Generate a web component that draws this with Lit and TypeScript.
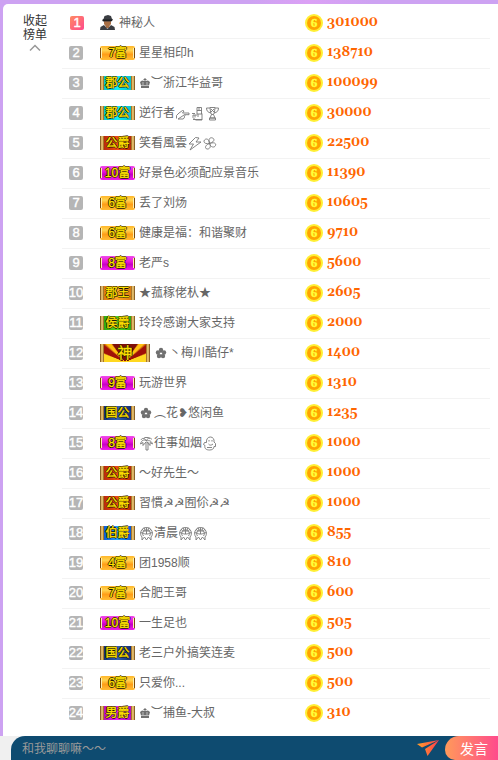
import { LitElement, html, css, svg } from "lit";
import { customElement } from "lit/decorators.js";
import { classMap } from "lit/directives/class-map.js";

type Title = { text: string; tone: string };
type Entry = { title?: Title; name: string; score: number };

const t = (text: string, tone: string): Title => ({ text, tone });

const entries: Entry[] = [
  { name: "神秘人", score: 301000 },
  { title: t("7富", "gold"), name: "星星相印h", score: 138710 },
  { title: t("郡公", "cyan"), name: "{crown}︶浙江华益哥", score: 100099 },
  { title: t("郡公", "cyan"), name: "逆行者{hand}{peace}{cup}", score: 30000 },
  { title: t("公爵", "red"), name: "笑看風雲{bolt}{clover}", score: 22500 },
  { title: t("10富", "pink"), name: "好景色必须配应景音乐", score: 11390 },
  { title: t("6富", "gold"), name: "丢了刘炀", score: 10605 },
  { title: t("6富", "gold"), name: "健康是福：和谐聚财", score: 9710 },
  { title: t("8富", "pink"), name: "老严s", score: 5600 },
  { title: t("郡王", "orange"), name: "★菰稼佬朲★", score: 2605 },
  { title: t("侯爵", "green"), name: "玲玲感谢大家支持", score: 2000 },
  { title: t("神", "god"), name: "{flower}丶梅川酷仔*", score: 1400 },
  { title: t("9富", "pink"), name: "玩游世界", score: 1310 },
  { title: t("国公", "navy"), name: "{flower}︵花❥悠闲鱼", score: 1235 },
  { title: t("8富", "pink"), name: "{palm}往事如烟{ghost}", score: 1000 },
  { title: t("公爵", "red"), name: "～好先生～", score: 1000 },
  { title: t("公爵", "red"), name: "習慣☭☭囿伱☭☭", score: 1000 },
  { title: t("伯爵", "blue"), name: "{mum}清晨{mum}{mum}", score: 855 },
  { title: t("4富", "gold"), name: "团1958顺", score: 810 },
  { title: t("7富", "gold"), name: "合肥王哥", score: 600 },
  { title: t("10富", "pink"), name: "一生足也", score: 505 },
  { title: t("国公", "navy"), name: "老三户外搞笑连麦", score: 500 },
  { title: t("6富", "gold"), name: "只爱你...", score: 500 },
  { title: t("男爵", "purple"), name: "{crown}︶捕鱼-大叔", score: 310 },
];

const glyphs: Record<string, unknown> = {
  hand: svg`<path d="M1.500 12.500V9.500L4 7l3.500-2.500L9 5 7.500 7H14v1.700H9.500M9.500 8.700l.5 1-.8 1.200.2 1L8 13H3z"/>`,
  peace: svg`<path d="M7 8V1.500h4.500V8M7 4.500h4.500M9 1.500v3M12 7.500V14H5.500L3 11.500V9h4M2 7.500h3M7 8h5M5 9v2.500M8 8v3M3 13.500h9"/>`,
  cup: svg`<path d="M5 1.500h5L9.500 6 8.500 8.500h-2L5.500 6zM5 2H1.500C1.500 5 3 6.500 6 7M10 2h3.500c0 3-1.500 4.500-4.500 5M6.500 8.500 5 12h5L8.500 8.500M4.500 14V12h6v2zM6 3l3 3M9 3 6 6"/>`,
  bolt: svg`<path d="M8.500 1.500 2 8h4.500L3 14 14 6H9L12 2z"/>`,
  clover: svg`<path d="M7.500 7.500C3 8.500 1 6 2.500 4s5-1 5 3.500C6 3 8 1 10.500 2s2 4-3 5.500c4-1.500 7-.5 6 2s-5 2-6-2c2 3 0 6-2.500 5.500S3 9 7.500 7.500z"/>`,
  palm: svg`<path d="M7.500 5C5 3 2.500 4 1.500 8L4 6.500 4 9.500 7 6M7.500 5C6 2 3 1.500 2 4M7.500 5C8 2 11 1 13 3.500M7.500 5c3-1 5 0 6 3L11 6.500v3L8 6M4.500 2.500 6 1.500h3l2 1M7 6v8M9 6v8M7 14h2"/>`,
  ghost: svg`<path d="M4.500 6.500C4 3 6 1 8.500 1S12.500 3.500 12 6l1.500 1.500v3L12 10.500c0 2.500-2 3.500-4.500 3.500S2 13 3 9.500L1.500 8.500l1-2zM7 4v1.500M10 4v1.500M6.500 8c1 1.500 3 1.500 4.500 0M5 11.500h5"/>`,
  mum: svg`<path d="M3 11C0 8 2 1.500 7.500 1.500S15 8 12 11M4.500 10C2.500 7 4 4 7.500 4S12.500 7 10.500 10M7.500 1.500V8M3 3l2.500 3M12 3 9.500 6M1.500 6.500l4 1M13.500 6.500l-4 1M5.500 8h4M3 11v3l2.500-3 2 3 2-3L12 14v-3M5 1.500l1.500 4M10 1.500l-1.500 4"/>`,
  flower: svg`<g class="solid"><circle cx="7" cy="4" r="2.200"/><circle cx="10" cy="6.500" r="2.200"/><circle cx="9" cy="10" r="2.200"/><circle cx="5" cy="10" r="2.200"/><circle cx="4" cy="6.500" r="2.200"/></g><circle class="core" cx="7" cy="7.500" r="1.500"/>`,
  crown: svg`<path class="solid" d="M5.500 2h1v1h1v1h-1v1L9 4.500l2 1.500-1 3.500V12H2V9.500L1 6l2-1.500L5.500 5V4h-1V3h1z"/><path class="slit" d="M2 9.500h8M4 6v3M8 6v3"/>`,
};

@customElement("rank-name")
export class RankName extends LitElement {
  static properties = { value: {} };
  declare value: string;

  static styles = css`
    :host { display: inline-flex; align-items: center; white-space: nowrap; }
    svg { width: 15px; height: 15px; fill: none; stroke: #777; stroke-width: 0.9; }
    svg.slim { width: 12px; }
    .solid { fill: #707070; stroke: none; }
    .core { fill: #fff; stroke: #666; }
    .slit { stroke: #ddd; stroke-width: 0.7; }
  `;

  render() {
    return this.value
      .split(/(\{\w+\})/)
      .filter(Boolean)
      .map((part) => {
        if (!part.startsWith("{")) return html`<span>${part}</span>`;
        const name = part.slice(1, -1);
        const slim = name === "crown";
        return html`<svg class=${slim ? "slim" : ""} viewBox=${slim ? "0 0 12 15" : "0 0 15 15"} aria-hidden="true">${glyphs[name]}</svg>`;
      });
  }
}

@customElement("app-root")
export class AppRoot extends LitElement {
  static styles = css`
    :host {
      display: flex;
      flex-direction: column;
      min-height: 100vh;
      box-sizing: border-box;
      font: 12px/15px "Liberation Sans", "Noto Sans CJK SC", "DejaVu Sans", sans-serif;
      color: #666;
      background: linear-gradient(90deg, #cda2f2 50%, #dba0f5 62%, #cda2f2 75%);
    }
    .panel {
      flex: 1;
      display: flex;
      align-items: flex-start;
      margin: 4px 0 0 3px;
      padding: 5px 8px 0 0;
      background: #fff;
      border-top-left-radius: 5px;
    }
    .toggle {
      flex: none;
      width: 59px;
      display: flex;
      flex-direction: column;
      align-items: center;
      padding: 5px 0 0 5px;
      border: 0;
      background: none;
      color: #333;
      font: inherit;
      line-height: 14px;
    }
    .toggle svg { width: 12px; height: 8px; margin-top: 2px; fill: none; stroke: #999; stroke-width: 1.500; }
    table { flex: 1; border-collapse: separate; border-spacing: 0; table-layout: fixed; width: 100%; }
    td { height: 27px; padding: 0 0 2px; border-bottom: 1px solid #f3f3f3; vertical-align: middle; }
    tr:last-child td { border-bottom-color: transparent; }
    .rank-cell { width: 31px; padding-left: 7px; }
    .name-cell { width: 205px; }
    .rank {
      display: flex;
      align-items: center;
      justify-content: center;
      width: 14px;
      height: 14px;
      border-radius: 2px;
      background: #b5b5b5;
      color: #fff;
      font-size: 13px;
      -webkit-text-stroke: 0.4px #fff;
    }
    .rank.first { margin-left: 1px; background: linear-gradient(135deg, #ff8a62, #ff4a8d); }
    .person, .score { display: flex; align-items: center; gap: 4px; }
    rank-name { padding-top: 2px; }
    .avatar { width: 15px; height: 15px; }
    .score {
      color: #ff6600;
      font: bold 13px/15px Georgia, Gelasio, "DejaVu Serif", serif;
      font-variant-numeric: oldstyle-nums;
    }
    .coin { width: 18px; height: 18px; }
    .coin text { font: bold 13px "Liberation Serif", serif; fill: #ffff3c; stroke: #ffff3c; stroke-width: 0.4; text-anchor: middle; }

    .title {
      --plate: #fb2;
      display: flex;
      align-items: center;
      justify-content: center;
      box-sizing: border-box;
      width: 35px;
      height: 14px;
      background:
        linear-gradient(90deg, #63380a, #ffdc84 50%, #8a5510) left / 4px 100% no-repeat,
        linear-gradient(90deg, #8a5510, #ffdc84 50%, #63380a) right / 4px 100% no-repeat,
        var(--plate);
      color: #ffe000;
      font: 12px/14px "Liberation Sans", "Noto Sans CJK SC", sans-serif;
      -webkit-text-stroke: 0.3px #ffe000;
      text-shadow: 1px 0 #1a1200, -1px 0 #1a1200, 0 1px #1a1200, 0 -1px #1a1200;
    }
    .gold, .pink {
      border-radius: 2px;
      background:
        linear-gradient(90deg, #7a4a10 1px, #fff0b0 1px) left / 2px 10px no-repeat,
        linear-gradient(270deg, #7a4a10 1px, #fff0b0 1px) right / 2px 10px no-repeat,
        var(--plate);
    }
    .gold { --plate: linear-gradient(#ffb52a, #ffd34d 30%, #ff9d16 60%, #ffbd35); }
    .pink { --plate: linear-gradient(#f04be8, #e516dc 40%, #c800c4 60%, #f020e8); }
    .cyan { --plate: linear-gradient(90deg, #08b4bc, #14eef4 50%, #08b4bc); }
    .red { --plate: linear-gradient(90deg, #a82008, #f04c14 50%, #a82008); }
    .orange { --plate: linear-gradient(90deg, #d47008, #ffa428 50%, #d47008); }
    .green { --plate: linear-gradient(90deg, #28980c, #54d824 50%, #28980c); }
    .navy { --plate: linear-gradient(90deg, #0c2264, #3060b0 50%, #0c2264); }
    .blue { --plate: linear-gradient(90deg, #0844c8, #20a4ff 50%, #0844c8); }
    .purple { --plate: linear-gradient(90deg, #a80cb0, #e820ec 50%, #a80cb0); }
    .god {
      --plate: conic-gradient(from 270deg at 50% 100%, #ffd820 20deg, #a01008 24deg 38deg, #ffc010 44deg 52deg, #801008 56deg 124deg, #ffc010 128deg 136deg, #a01008 142deg 156deg, #ffd820 160deg);
      width: 50px;
      height: 18px;
      font-size: 15px;
      line-height: 18px;
    }

    .composer {
      display: flex;
      height: 24px;
      padding-left: 11px;
      background: #f0f0f0;
    }
    .bar {
      flex: 1;
      display: flex;
      align-items: center;
      min-width: 0;
      background: #0e4b70;
      border-radius: 14px 0 0 0;
      overflow: hidden;
    }
    input {
      flex: 1;
      min-width: 0;
      padding: 2px 0 0 11px;
      border: 0;
      outline: 0;
      background: none;
      color: #fff;
      font: inherit;
    }
    input::placeholder { color: #999; opacity: 1; }
    .plane { flex: none; width: 28px; height: 18px; padding: 0; border: 0; background: none; }
    .plane svg { display: block; width: 23px; height: 18px; }
    .send {
      flex: none;
      width: 53px;
      height: 24px;
      padding: 0 0 0 5px;
      border: 0;
      border-radius: 14px 0 0 10px;
      background: linear-gradient(90deg, #ff9a5a, #ff4b8c);
      color: #fff;
      font: 14px/22px "Noto Sans CJK SC", sans-serif;
    }
  `;

  private avatar = html`<svg class="avatar" viewBox="0 0 15 15" aria-hidden="true">
    <path fill="#a86f45" d="M4 5h7v4l-1.500 2v2h-4v-2L4 9z"/>
    <path fill="#3a3d42" d="M3.500 4 4.500 1 8 0l3 1 .8 2.500L13 4.500 12 6l-1 .5H3L2 5zM0 15l.5-3L4 10l3 3.500h1L11 10l3.500 2 .5 3z"/>
    <path fill="#1d1e20" d="M3 4.500h9V6H3z"/>
  </svg>`;

  private coin = html`<svg class="coin" viewBox="0 0 18 18" aria-hidden="true">
    <circle cx="9" cy="9" r="9" fill="#ffef35"/>
    <circle cx="9" cy="9" r="7" fill="#ffa400"/>
    <text x="9" y="13">6</text>
  </svg>`;

  private row(entry: Entry, index: number) {
    return html`<tr>
      <td class="rank-cell"><span class=${classMap({ rank: true, first: index === 0 })}>${index + 1}</span></td>
      <td class="name-cell"><div class="person">
        ${entry.title
          ? html`<span class=${`title ${entry.title.tone}`}>${entry.title.text}</span>`
          : this.avatar}
        <rank-name .value=${entry.name}></rank-name>
      </div></td>
      <td><div class="score">${this.coin}<span>${entry.score}</span></div></td>
    </tr>`;
  }

  render() {
    return html`
      <main class="panel">
        <button class="toggle" type="button">
          <span>收起<br />榜单</span>
          <svg viewBox="0 0 12 8" aria-hidden="true"><path d="M1 6.500 6 1.500 11 6.500"/></svg>
        </button>
        <table><tbody>${entries.map((entry, i) => this.row(entry, i))}</tbody></table>
      </main>
      <form class="composer" @submit=${(e: Event) => e.preventDefault()}>
        <div class="bar">
          <input type="text" aria-label="聊天内容" placeholder="和我聊聊嘛～～" />
          <button class="plane" type="button" aria-label="飞屏">
            <svg viewBox="0 0 23 18" aria-hidden="true">
              <defs><linearGradient id="fly"><stop stop-color="#ffa02c"/><stop offset="1" stop-color="#ff3c4c"/></linearGradient></defs>
              <path fill="url(#fly)" d="M0 5 22 1 5 8.500zM8 10 22 1 10.500 17z"/>
            </svg>
          </button>
          <button class="send" type="submit">发言</button>
        </div>
      </form>
    `;
  }
}
